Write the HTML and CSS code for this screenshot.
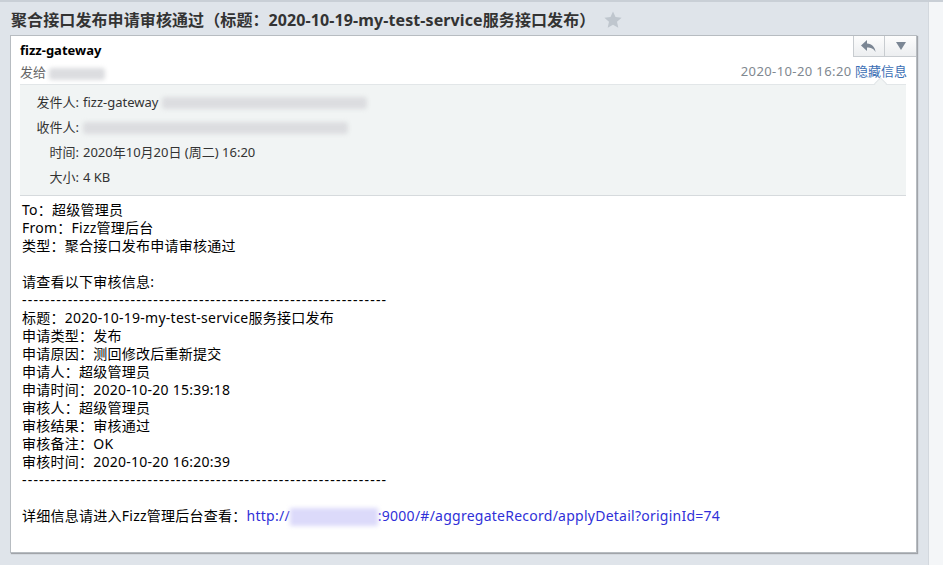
FILE: index.html
```html
<!DOCTYPE html>
<html lang="zh-CN">
<head>
    <meta charset="UTF-8">
    <title>聚合接口发布申请审核通过</title>
    <link rel="stylesheet" href="styles.css">
</head>
<body>
    <div class="page">
        <div class="reader">
            <h1 class="subject">
                聚合接口发布申请审核通过（标题：2020-10-19-my-test-service服务接口发布）
                <svg class="star" width="20" height="20" viewBox="0 0 20 20"><path d="M10 1.5l2.5 5.6 6.1.6-4.6 4.1 1.3 6-5.3-3.1-5.3 3.1 1.3-6-4.6-4.1 6.1-.6z" fill="#bfc6ce"/></svg>
            </h1>

            <div class="mail">
                <div class="mail-head">
                    <div class="who">
                        <div class="sender">fizz-gateway</div>
                        <div class="to">发给 <span class="blur short"></span></div>
                    </div>
                    <div class="side">
                        <div class="tools">
                            <button class="tool">
                                <svg width="16" height="12" viewBox="0 0 16 12"><path d="M6 0L0 5.5 6 11V7.5c4 0 6.5 1 8.5 4.5C14 7 11 4 6 3.6z" fill="#7b8694"/></svg>
                            </button>
                            <button class="tool">
                                <svg width="10" height="8" viewBox="0 0 10 8"><path d="M0 0h10L5 8z" fill="#7b8694"/></svg>
                            </button>
                        </div>
                        <div class="meta"><span class="date">2020-10-20 16:20</span> <a href="#" class="toggle">隐藏信息</a></div>
                    </div>
                </div>

                <div class="info">
                    <div class="row"><span class="label">发件人:</span><span>fizz-gateway<span class="blur long"></span></span></div>
                    <div class="row"><span class="label">收件人:</span><span><span class="blur wide"></span></span></div>
                    <div class="row"><span class="label">时间:</span><span>2020年10月20日 (周二) 16:20</span></div>
                    <div class="row"><span class="label">大小:</span><span>4 KB</span></div>
                </div>

                <div class="content">
                    <p>To：超级管理员</p>
                    <p>From：Fizz管理后台</p>
                    <p>类型：聚合接口发布申请审核通过</p>
                    <p>&nbsp;</p>
                    <p>请查看以下审核信息:</p>
                    <p class="rule">----------------------------------------------------------------</p>
                    <p>标题：2020-10-19-my-test-service服务接口发布</p>
                    <p>申请类型：发布</p>
                    <p>申请原因：测回修改后重新提交</p>
                    <p>申请人：超级管理员</p>
                    <p>申请时间：2020-10-20 15:39:18</p>
                    <p>审核人：超级管理员</p>
                    <p>审核结果：审核通过</p>
                    <p>审核备注：OK</p>
                    <p>审核时间：2020-10-20 16:20:39</p>
                    <p class="rule">----------------------------------------------------------------</p>
                    <p>&nbsp;</p>
                    <p>详细信息请进入Fizz管理后台查看：<a href="#" class="link">http://<span class="blur host"></span>:9000/#/aggregateRecord/applyDetail?originId=74</a></p>
                </div>
            </div>
        </div>
        <div class="gutter"></div>
    </div>
</body>
</html>
```

FILE: styles.css
```css
body {
    margin: 0;
    background-color: #dfe4ea;
    font-family: "Noto Sans", "Noto Sans CJK SC", sans-serif;
    color: #000;
}

.page {
    display: flex;
    height: 565px;
    border-top: 2px solid #c9cfd6;
    box-sizing: border-box;
}

.reader {
    width: 928px;
    border-right: 1px solid #d3d8de;
}

.gutter {
    flex: 1;
    background-color: #f4f6f8;
}

.subject {
    margin: 0;
    padding: 2px 0 0 11px;
    height: 31px;
    font-size: 16px;
    font-weight: bold;
    color: #333;
    line-height: 24px;
    display: flex;
    align-items: center;
    letter-spacing: 0.1px;
}

.star {
    margin-left: 8px;
}

/* Mail card */
.mail {
    margin-left: 10px;
    width: 905px;
    height: 516px;
    background-color: #fff;
    border: 1px solid #b7bcc1;
    box-shadow: 1px 1px 1px rgba(0, 0, 0, 0.28);
}

.mail-head {
    display: flex;
    justify-content: space-between;
    height: 48px;
}

.who {
    padding: 5px 0 0 9px;
}

.sender {
    font-size: 13px;
    font-weight: bold;
    line-height: 18px;
}

.to {
    margin-top: 4px;
    font-size: 13px;
    line-height: 18px;
    color: #666;
}

.side {
    display: flex;
    flex-direction: column;
    align-items: flex-end;
}

.tools {
    display: flex;
}

.tool {
    width: 32px;
    height: 21px;
    padding: 0;
    border: 1px solid #c8ccd0;
    border-top: none;
    background: linear-gradient(#fdfdfd, #eceef0);
    display: flex;
    align-items: center;
    justify-content: center;
}

.tool + .tool {
    border-left: none;
    border-right: none;
    width: 31px;
}

.meta {
    margin: 5px 9px 0 0;
    font-size: 13px;
    line-height: 18px;
    color: #808890;
}

.date {
    letter-spacing: 0.4px;
}

.toggle {
    color: #3b6eb4;
    text-decoration: none;
}

/* Header details */
.info {
    position: relative;
    margin: 0 10px 0 9px;
    padding: 4px 0 6px;
    background-color: #f1f4f4;
    border-top: 1px solid #e2e6e8;
    border-bottom: 1px solid #d6dadd;
    font-size: 13px;
    color: #333;
}

.info::before {
    content: "";
    position: absolute;
    top: -6px;
    right: 21px;
    width: 8px;
    height: 8px;
    background-color: #f1f4f4;
    border-left: 1px solid #e2e6e8;
    border-top: 1px solid #e2e6e8;
    transform: rotate(45deg);
}

.row {
    display: flex;
    height: 25px;
    align-items: center;
}

.label {
    width: 59px;
    text-align: right;
    margin-right: 4px;
}

.blur {
    display: inline-block;
    height: 12px;
    vertical-align: middle;
    background-color: #dcdde0;
    filter: blur(2px);
    border-radius: 3px;
}

.short { width: 56px; }
.long { width: 205px; margin-left: 4px; }
.wide { width: 265px; }
.host { width: 88px; height: 18px; background-color: #dcdafa; border-radius: 0; }

/* Message body */
.content {
    padding: 5px 0 0 11px;
    font-size: 14px;
    line-height: 18px;
    letter-spacing: 0.25px;
}

.content p {
    margin: 0;
    white-space: nowrap;
}

.rule {
    letter-spacing: 1.2px;
}

.link {
    color: #3030d8;
    text-decoration: none;
}
```
